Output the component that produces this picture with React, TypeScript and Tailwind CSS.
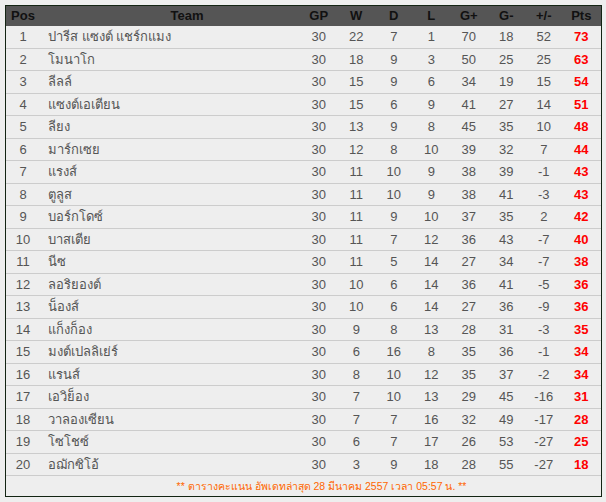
import React from "react";

type Row = [number, string, number, number, number, number, number, number, number, number];

// ตารางคะแนน
const rows: Row[] = [
  [1, "ปารีส แซงต์ แชร์กแมง", 30, 22, 7, 1, 70, 18, 52, 73],
  [2, "โมนาโก", 30, 18, 9, 3, 50, 25, 25, 63],
  [3, "ลีลล์", 30, 15, 9, 6, 34, 19, 15, 54],
  [4, "แซงต์เอเตียน", 30, 15, 6, 9, 41, 27, 14, 51],
  [5, "ลียง", 30, 13, 9, 8, 45, 35, 10, 48],
  [6, "มาร์กเซย", 30, 12, 8, 10, 39, 32, 7, 44],
  [7, "แรงส์", 30, 11, 10, 9, 38, 39, -1, 43],
  [8, "ตูลูส", 30, 11, 10, 9, 38, 41, -3, 43],
  [9, "บอร์กโดซ์", 30, 11, 9, 10, 37, 35, 2, 42],
  [10, "บาสเตีย", 30, 11, 7, 12, 36, 43, -7, 40],
  [11, "นีซ", 30, 11, 5, 14, 27, 34, -7, 38],
  [12, "ลอริยองต์", 30, 10, 6, 14, 36, 41, -5, 36],
  [13, "น็องส์", 30, 10, 6, 14, 27, 36, -9, 36],
  [14, "แก็งก็อง", 30, 9, 8, 13, 28, 31, -3, 35],
  [15, "มงต์เปลลิเย่ร์", 30, 6, 16, 8, 35, 36, -1, 34],
  [16, "แรนส์", 30, 8, 10, 12, 35, 37, -2, 34],
  [17, "เอวิย็อง", 30, 7, 10, 13, 29, 45, -16, 31],
  [18, "วาลองเซียน", 30, 7, 7, 16, 32, 49, -17, 28],
  [19, "โซโชซ์", 30, 6, 7, 17, 26, 53, -27, 25],
  [20, "อฌักซิโอ้", 30, 3, 9, 18, 28, 55, -27, 18],
];

const cols = "grid grid-cols-[34px_260px_repeat(8,37.5px)]";
const heads = ["GP", "W", "D", "L", "G+", "G-", "+/-", "Pts"];

export default function App() {
  return (
    <div className="min-h-screen bg-[#eeeeee] p-[5px] font-['Liberation_Sans',Arial,sans-serif] text-[13px]">
      <div className="w-[597px] border border-[#132413] bg-[#eeeeee]">
        {/* header */}
        <div className={`${cols} h-[20px] items-center bg-[#555555] font-bold text-[#111111]`}>
          <div className="text-center">Pos</div>
          <div className="pl-[34px] text-center">Team</div>
          {heads.map((h) => (
            <div key={h} className="text-center">{h}</div>
          ))}
        </div>

        {/* rows */}
        {rows.map((r) => (
          <div
            key={r[0]}
            className={`${cols} h-[22.5px] items-center border-b border-[#cccccc] text-[#555555]`}
          >
            <div className="text-center">{r[0]}</div>
            <div className="pl-[8px]">{r[1]}</div>
            {r.slice(2, 9).map((v, i) => (
              <div key={i} className="text-center">{v}</div>
            ))}
            <div className="text-center font-bold text-[#ff0000]">{r[9]}</div>
          </div>
        ))}

        <div className="flex h-[20px] items-center justify-center pl-[36px] pt-[2px] text-[10.5px] text-[#ff6600]">
          ** ตารางคะแนน อัพเดทล่าสุด 28 มีนาคม 2557 เวลา 05:57 น. **
        </div>
      </div>
    </div>
  );
}
